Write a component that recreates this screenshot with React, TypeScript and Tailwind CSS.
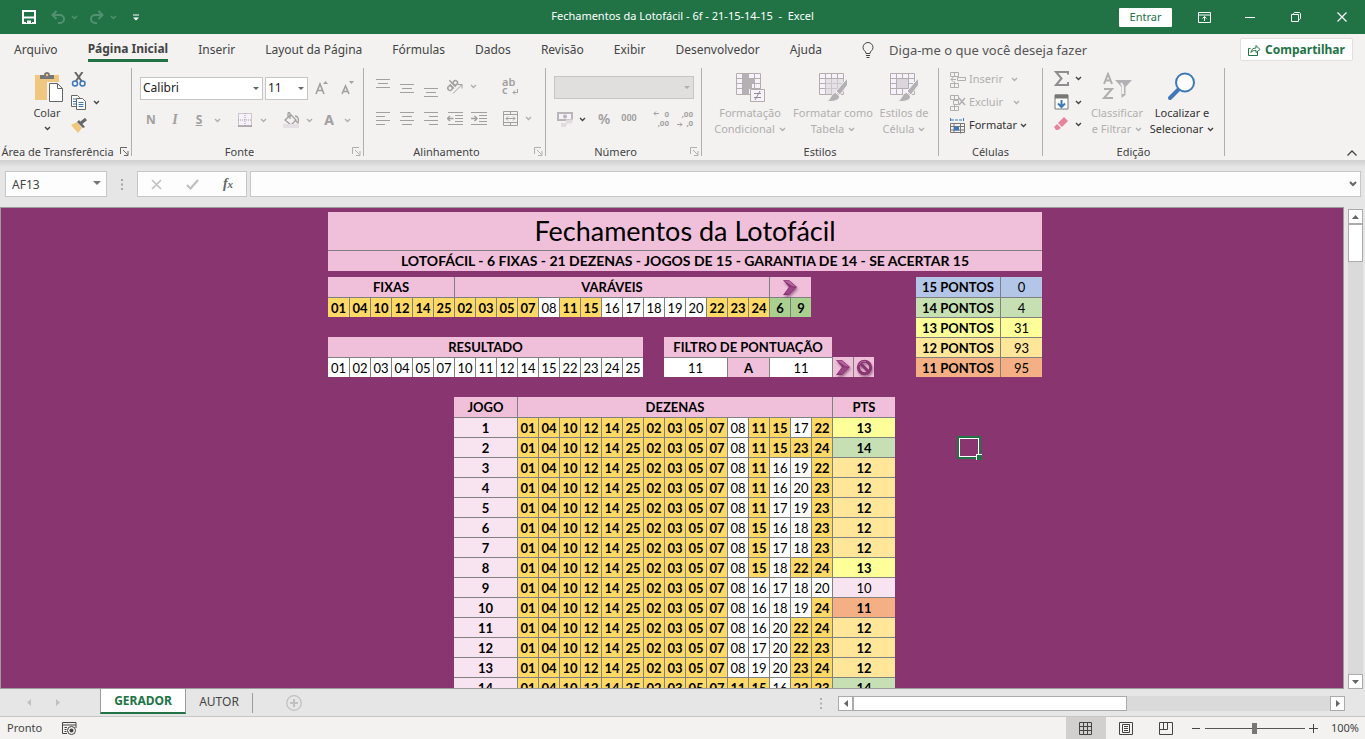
import React, { useState } from 'react';

const FIXED = ['01', '04', '10', '12', '14', '25'];
const VARIABLE = ['02', '03', '05', '07', '08', '11', '15', '16', '17', '18', '19', '20', '22', '23', '24'];
const RESULT = ['01', '02', '03', '04', '05', '07', '10', '11', '12', '14', '15', '22', '23', '24', '25'];

// Every game starts with the same ten numbers, only the tail changes
const GAME_HEAD = ['01', '04', '10', '12', '14', '25', '02', '03', '05', '07'];
const GAME_TAILS = [
  ['08', '11', '15', '17', '22'],
  ['08', '11', '15', '23', '24'],
  ['08', '11', '16', '19', '22'],
  ['08', '11', '16', '20', '23'],
  ['08', '11', '17', '19', '23'],
  ['08', '15', '16', '18', '23'],
  ['08', '15', '17', '18', '23'],
  ['08', '15', '18', '22', '24'],
  ['08', '16', '17', '18', '20'],
  ['08', '16', '18', '19', '24'],
  ['08', '16', '20', '22', '24'],
  ['08', '17', '20', '22', '23'],
  ['08', '19', '20', '23', '24'],
  ['11', '15', '16', '22', '23'],
];

const POINTS = [
  { points: 15, total: 0 },
  { points: 14, total: 4 },
  { points: 13, total: 31 },
  { points: 12, total: 93 },
  { points: 11, total: 95 },
];

const pointColors: Record<number, string> = {
  15: 'bg-[#b4c6e7]',
  14: 'bg-[#c6e0b4]',
  13: 'bg-[#ffff99]',
  12: 'bg-[#ffe699]',
  11: 'bg-[#f4b084]',
};

const TABS = ['Arquivo', 'Página Inicial', 'Inserir', 'Layout da Página', 'Fórmulas', 'Dados', 'Revisão', 'Exibir', 'Desenvolvedor', 'Ajuda'];

interface IconProps {
  w: number;
  h: number;
  className?: string;
  children: React.ReactNode;
}

const Icon: React.FC<IconProps> = ({ w, h, className = '', children }) => (
  <svg width={w} height={h} viewBox={`0 0 ${w} ${h}`} fill="none" stroke="currentColor" className={`shrink-0 ${className}`} aria-hidden="true">
    {children}
  </svg>
);

const Chevron: React.FC<{ className?: string }> = ({ className = 'text-[#b1afae]' }) => (
  <Icon w={7} h={5} className={className}>
    <path d="M1 1l2.5 2.5L6 1" strokeWidth="1.4" />
  </Icon>
);

const Launcher: React.FC<{ className?: string }> = ({ className = 'text-[#b1afae]' }) => (
  <button className={`absolute right-[2px] bottom-0 ${className}`} aria-label="Mais opções">
    <Icon w={9} h={9}>
      <path d="M.5 7V.5H7M3 3l4.5 4.5M8 4v4.5H4" />
    </Icon>
  </button>
);

interface GroupProps {
  label: string;
  className: string;
  launcher?: React.ReactNode;
  children: React.ReactNode;
}

const Group: React.FC<GroupProps> = ({ label, className, launcher, children }) => (
  <section className={`relative flex h-[88px] shrink-0 flex-col border-r border-[#b1afae] ${className}`}>
    <div className="flex-1">{children}</div>
    <div className="flex h-[9px] items-center justify-center whitespace-nowrap leading-[9px]">{label}</div>
    {launcher}
  </section>
);

const Tool: React.FC<{ label: string; className?: string; children: React.ReactNode }> = ({ label, className = 'w-6', children }) => (
  <button aria-label={label} className={`flex h-6 shrink-0 items-center justify-center ${className}`}>
    {children}
  </button>
);

const AlignIcon: React.FC<{ rows: [number, number][] }> = ({ rows }) => (
  <Icon w={14} h={rows.length * 4 - 3}>
    {rows.map(([x, len], i) => (
      <path key={i} d={`M${x} ${i * 4 + 0.5}h${len}`} />
    ))}
  </Icon>
);

const GridIcon: React.FC<{ brush?: boolean; children?: React.ReactNode }> = ({ brush, children }) => (
  <Icon w={30} h={30}>
    <path d="M1.5 1.5h24v21h-24z" fill="#f6f1fa" />
    <path d="M1.5 6.5h24M1.5 11.500h24M1.5 16.500h24M7.500 1.500v21M13.500 1.500v21M19.500 1.500v21" />
    {children}
    {brush && (
      <>
        <path d="M29.500 6L18 19l4 4 7.500-10z" fill="#b3b1b3" stroke="#f3f2f1" />
        <path d="M17.500 20.500l4 3.500c0 4-4 6-14 5.500 5 0 5-8 10-9z" fill="#b3b1b3" stroke="#f3f2f1" />
      </>
    )}
  </Icon>
);

const ArrowShape: React.FC = () => (
  <svg width="17" height="17" viewBox="0 0 17 17" aria-hidden="true" className="drop-shadow-[1px_2px_1px_rgba(90,40,80,0.5)]">
    <path d="M1 1h6l8 7-8 8H1l6-8z" fill="#883570" />
    <path d="M2 1.500h5l7 6.500-4-1z" fill="#b463a0" />
    <path d="M3 14l5-6 5 1-6 6z" fill="#9c4687" />
  </svg>
);

const TitleBar: React.FC = () => (
  <header className="grid h-[34px] shrink-0 grid-cols-[1fr_auto_1fr] items-center bg-[#217346] text-[#fff]">
    <div className="flex items-center pl-[22px]">
      <button aria-label="Salvar">
        <Icon w={14} h={14}>
          <path d="M1 1h12v12H1z" strokeWidth="2" />
          <path d="M1 7.500h12" strokeWidth="2" />
          <path d="M4.500 13v-3h5v3" fill="currentColor" stroke="#217346" strokeWidth="1" />
        </Icon>
      </button>
      <button aria-label="Desfazer" className="ml-[15px] flex items-center gap-[6px] text-[#519171]">
        <Icon w={14} h={14}>
          <path d="M5.500 1L1.500 5l4 4M1.500 5H9a4 4 0 010 8H7" strokeWidth="2" />
        </Icon>
        <Chevron className="text-[#519171]" />
      </button>
      <button aria-label="Refazer" className="ml-3 flex items-center gap-[6px] text-[#519171]">
        <Icon w={14} h={14}>
          <path d="M8.500 1l4 4-4 4M12.500 5H5a4 4 0 000 8h2" strokeWidth="2" />
        </Icon>
        <Chevron className="text-[#519171]" />
      </button>
      <button aria-label="Personalizar barra" className="ml-4">
        <Icon w={6} h={7}>
          <path d="M0 1h6" />
          <path d="M0 3.500h6L3 6.500z" fill="currentColor" stroke="none" />
        </Icon>
      </button>
    </div>
    <h1 className="whitespace-pre pb-[2px] text-[11px] leading-4">Fechamentos da Lotofácil - 6f - 21-15-14-15  -  Excel</h1>
    <div className="flex items-center justify-end">
      <button className="mr-[9px] h-[19px] w-[53px] rounded-[1px] bg-white text-[11px] leading-4 text-[#217346]">Entrar</button>
      <Tool label="Opções da faixa" className="w-[46px]">
        <Icon w={13} h={11}>
          <path d="M.5.500h12v10H.5zM.5 3h12M6.500 9V4.500M4.500 6.500l2-2 2 2" />
        </Icon>
      </Tool>
      <Tool label="Minimizar" className="w-[46px]">
        <Icon w={10} h={1}>
          <path d="M0 .5h10" />
        </Icon>
      </Tool>
      <Tool label="Restaurar" className="w-[46px]">
        <Icon w={10} h={10}>
          <path d="M.5 2.500h7v7h-7zM2.500 2.500v-1l1-1h5l1 1v5l-1 1h-1" />
        </Icon>
      </Tool>
      <Tool label="Fechar" className="w-[46px]">
        <Icon w={10} h={10}>
          <path d="M.5.500l9 9M9.500.500l-9 9" strokeWidth="1.200" />
        </Icon>
      </Tool>
    </div>
  </header>
);

const MenuBar: React.FC = () => (
  <nav className="mb-[2px] flex h-[31px] shrink-0 items-center px-3 text-xs leading-5 text-[#444]">
    <div className="flex items-center gap-[30px] pl-[2px]">
      {TABS.map((tab) => (
        <button
          key={tab}
          className={`h-[25px] whitespace-nowrap ${tab === 'Página Inicial' ? 'border-b-[3px] border-[#217346] pt-[2px] font-bold' : ''}`}
        >
          {tab}
        </button>
      ))}
    </div>
    <label className="ml-10 flex flex-1 items-center gap-[15px]">
      <Icon w={12} h={16}>
        <path d="M4 11.500C4 9 1 8.500 1 5.500a5 5 0 0110 0c0 3-3 3.500-3 6zM4 13.500h4M4.500 15.500h3" />
      </Icon>
      <input
        className="w-full bg-transparent text-[13px] outline-none placeholder:text-[#555]"
        placeholder="Diga-me o que você deseja fazer"
        aria-label="Pesquisar"
      />
    </label>
    <button className="flex h-[23px] w-[113px] items-center justify-center gap-1 rounded-[2px] border border-[#e1dfdd] bg-white font-bold text-[#217346]">
      <Icon w={13} h={12}>
        <path d="M2.500 4.500h-2v7h9V8M3 8.500c0-3 2-4.500 5-4.500V1.500l4 4-4 3V6.500c-2 0-4 0-5 2z" />
      </Icon>
      Compartilhar
    </button>
  </nav>
);

const Field: React.FC<{ label: string; value: string; className: string; disabled?: boolean }> = ({ label, value, className, disabled }) => (
  <span className={`relative block ${className}`}>
    <select
      aria-label={label}
      disabled={disabled}
      className="h-[23px] w-full appearance-none border border-[#c8c6c4] bg-white px-[2px] text-xs leading-5 text-[#222] disabled:bg-[#e1dfdd] disabled:opacity-100"
    >
      <option>{value}</option>
    </select>
    <Icon w={6} h={3} className={`pointer-events-none absolute top-[10px] right-1 ${disabled ? 'text-[#b1afae]' : 'text-[#666]'}`}>
      <path d="M0 0h6L3 3z" fill="currentColor" stroke="none" />
    </Icon>
  </span>
);

const BigTool: React.FC<{ lines: [string, string]; className: string; chevron?: string; children: React.ReactNode }> = ({
  lines,
  className,
  chevron,
  children,
}) => (
  <button className={`flex shrink-0 flex-col items-center whitespace-nowrap pt-1 leading-4 ${className}`}>
    <span className="flex h-[33px] items-start">{children}</span>
    <span>{lines[0]}</span>
    <span className="flex items-center gap-1">
      {lines[1]}
      <Chevron className={chevron} />
    </span>
  </button>
);

const Ribbon: React.FC = () => (
  <div className="relative flex h-[93px] shrink-0 pt-px text-[11px] text-[#444]">
    <Group label="Área de Transferência" className="w-[132px] pr-[16px]" launcher={<Launcher className="text-[#666]" />}>
      <div className="flex pt-1 pl-[30px]">
        <button className="flex w-[34px] flex-col items-center leading-4">
          <Icon w={28} h={30} className="mb-[3px] ml-1">
            <path d="M0 3h24v25H0z" fill="#f0c77f" stroke="none" />
            <path d="M5 3h4c0-4 6-4 6 0h4v4H5z" fill="#777" stroke="none" />
            <circle cx="12" cy="3" r="1.200" fill="#f0c77f" stroke="none" />
            <path d="M13.500 11.500h10l4 4v14h-14z" fill="#fff" stroke="#f3f2f1" strokeWidth="3" />
            <path d="M14.500 11.500h8l5 5v13h-13zM22.500 11.500v5h5" fill="#fff" stroke="#666" />
          </Icon>
          Colar
          <span className="flex h-[14px] items-center">
            <Chevron className="text-[#444]" />
          </span>
        </button>
        <div className="ml-[7px] flex flex-col gap-2">
          <button aria-label="Recortar">
            <Icon w={16} h={15}>
              <path d="M4 0l6.500 9M11.500 0L5 9" stroke="#666" strokeWidth="2" />
              <circle cx="4" cy="11.500" r="2.500" stroke="#3e78b8" strokeWidth="1.500" />
              <circle cx="11.500" cy="11.500" r="2.500" stroke="#3e78b8" strokeWidth="1.500" />
            </Icon>
          </button>
          <button aria-label="Copiar" className="flex items-center gap-[6px]">
            <Icon w={16} h={15} className="text-[#666]">
              <path d="M.5.500h6l2 2v9h-8z" fill="#fff" />
              <path d="M2 4h4M2 6.500h3M2 9h3" stroke="#3e78b8" />
              <path d="M5.500 3.500h6l3 3v8h-9z" fill="#fff" />
              <path d="M7.500 7.500h5M7.500 9.500h5M7.500 11.500h5" stroke="#3e78b8" />
            </Icon>
            <Chevron className="text-[#444]" />
          </button>
          <button aria-label="Pincel de formatação">
            <Icon w={16} h={15}>
              <path d="M0 7l6-3 5 6-4 5z" fill="#f0c77f" stroke="none" />
              <path d="M6 4l2-2 6 7-2 1z" fill="#666" stroke="none" />
              <path d="M10 5l5-4" stroke="#666" strokeWidth="3" />
            </Icon>
          </button>
        </div>
      </div>
    </Group>

    <Group label="Fonte" className="w-[232px] pr-4" launcher={<Launcher />}>
      <div className="flex items-center gap-[2px] pt-2 pl-2">
        <Field label="Fonte" value="Calibri" className="w-[123px] shrink-0" />
        <Field label="Tamanho" value="11" className="w-[43px] shrink-0" />
        <Tool label="Aumentar fonte">
          <Icon w={14} h={14} className="text-[#a19fa0]">
            <path d="M1 13L5 3l4 10M2.500 9.500h5" strokeWidth="1.600" />
            <path d="M8 3l2.500-3L13 3z" fill="currentColor" stroke="none" />
          </Icon>
        </Tool>
        <Tool label="Diminuir fonte">
          <Icon w={14} h={14} className="text-[#a19fa0]">
            <path d="M1 13l3.500-8L8 13M2.500 10.500h4" strokeWidth="1.600" />
            <path d="M8 0h5l-2.500 3z" fill="currentColor" stroke="none" />
          </Icon>
        </Tool>
      </div>
      <div className="flex items-center pt-2 pl-[7px] text-[#a19fa0]">
        <Tool label="Negrito">
          <b className="text-xs">N</b>
        </Tool>
        <Tool label="Itálico">
          <i className="font-['Liberation_Serif'] text-sm font-bold">I</i>
        </Tool>
        <Tool label="Sublinhado">
          <b className="text-xs underline">S</b>
        </Tool>
        <Tool label="Tipo de sublinhado" className="w-3">
          <Chevron />
        </Tool>
        <span className="ml-[6px] h-5 w-px bg-[#c8c6c4]" />
        <Tool label="Bordas" className="ml-1 w-6">
          <Icon w={14} h={14}>
            <path d="M.5.500h13v13H.5zM7 0v14M0 7h14" strokeDasharray="1 1" fill="#f6f1fa" />
            <path d="M0 13h14" strokeWidth="1.500" />
          </Icon>
        </Tool>
        <Tool label="Opções de borda" className="w-3">
          <Chevron />
        </Tool>
        <span className="mx-[6px] h-5 w-px bg-[#c8c6c4]" />
        <Tool label="Cor de preenchimento" className="w-5">
          <Icon w={16} h={16}>
            <path d="M2 8l6-5 5 5-5 5z" fill="#f3f2f1" strokeWidth="1.300" />
            <path d="M7 7V2c0-2-2-2-2 0v3M12 4c3 0 4 3 3 7-1 0-2-2-3-3" strokeWidth="1.300" />
            <path d="M0 14h16" stroke="#e3dfe3" strokeWidth="4" />
          </Icon>
        </Tool>
        <Tool label="Opções de preenchimento" className="w-4">
          <Chevron />
        </Tool>
        <Tool label="Cor da fonte">
          <b className="text-sm">A</b>
        </Tool>
        <Tool label="Opções de cor" className="w-3">
          <Chevron />
        </Tool>
      </div>
    </Group>

    <Group label="Alinhamento" className="w-[182px] pr-4" launcher={<Launcher />}>
      <div className="flex pt-[6px] pl-[7px] text-[#a19fa0]">
        <div>
          <div className="flex h-6 items-start">
            <Tool label="Alinhar em cima" className="h-[19px] w-6">
              <AlignIcon rows={[[0, 14], [2, 10], [0, 14]]} />
            </Tool>
            <Tool label="Alinhar no meio" className="h-7 w-6">
              <AlignIcon rows={[[0, 14], [2, 10], [0, 14]]} />
            </Tool>
            <Tool label="Alinhar embaixo" className="h-9 w-6">
              <AlignIcon rows={[[0, 14], [2, 10], [0, 14]]} />
            </Tool>
            <Tool label="Orientação" className="h-6 w-6">
              <Icon w={16} h={16}>
                <g transform="rotate(-45 8 8)">
                  <circle cx="3" cy="6" r="2.200" strokeWidth="1.500" />
                  <path d="M5.500 3v6M8 0v9" strokeWidth="1.500" />
                  <circle cx="10.500" cy="6" r="2.200" strokeWidth="1.500" />
                </g>
                <path d="M6 15.500l9-9M11 6.500h4v4" />
              </Icon>
            </Tool>
            <Tool label="Opções de orientação" className="h-6 w-3">
              <Chevron />
            </Tool>
          </div>
          <div className="flex items-center pt-2">
            <Tool label="Alinhar à esquerda">
              <AlignIcon rows={[[0, 14], [0, 9], [0, 14], [0, 9]]} />
            </Tool>
            <Tool label="Centralizar">
              <AlignIcon rows={[[0, 14], [2, 10], [0, 14], [2, 10]]} />
            </Tool>
            <Tool label="Alinhar à direita">
              <AlignIcon rows={[[0, 14], [5, 9], [0, 14], [5, 9]]} />
            </Tool>
            <Tool label="Diminuir recuo">
              <Icon w={16} h={13}>
                <path d="M1 .5h15M8 3.500h8M8 6.500h8M8 9.500h8M1 12.500h15" />
                <path d="M6.500 6.500h-6M3 4L.5 6.500 3 9" strokeWidth="1.500" />
              </Icon>
            </Tool>
            <Tool label="Aumentar recuo">
              <Icon w={16} h={13}>
                <path d="M0 .5h16M8 3.500h8M8 6.500h8M8 9.500h8M0 12.500h16" />
                <path d="M0 6.500h6M3.500 4L6 6.500 3.500 9" strokeWidth="1.500" />
              </Icon>
            </Tool>
          </div>
        </div>
        <span className="ml-1 h-[59px] w-px bg-[#c8c6c4]" />
        <div className="pl-[7px]">
          <Tool label="Quebrar texto" className="h-6 w-4">
            <span className="relative block w-4 text-left text-[11px] leading-[8px] font-semibold">
              ab
              <br />c
              <Icon w={6} h={6} className="absolute right-0 -bottom-px">
                <path d="M5.500 0v3.500H1M3 1.500l-2 2 2 2" />
              </Icon>
            </span>
          </Tool>
          <div className="flex pt-2">
            <Tool label="Mesclar e centralizar" className="w-4">
              <Icon w={15} h={15}>
                <path d="M.5.500h14v14H.5zM.5 3.500h14M.5 11.500h14M7.500.500v3M7.500 11.500v3M3 7.500h9M5 5.500l-2 2 2 2M10 5.500l2 2-2 2" />
              </Icon>
            </Tool>
            <Tool label="Opções de mesclagem" className="w-5">
              <Chevron />
            </Tool>
          </div>
        </div>
      </div>
    </Group>

    <Group label="Número" className="w-[156px] pr-4" launcher={<Launcher />}>
      <div className="w-[148px] pt-2 pl-2">
        <Field label="Formato de número" value="" className="w-full" disabled />
      </div>
      <div className="flex items-center pt-2 pl-[11px] text-[#a19fa0]">
        <Tool label="Formato contábil" className="w-4">
          <Icon w={16} h={15} className="text-[#b8b6b8]">
            <path d="M1 1h14v7H1z" strokeWidth="2" fill="#f6f1fa" />
            <circle cx="8" cy="4.500" r="2" fill="currentColor" stroke="none" />
            <path d="M9 8.500h7M9 10.500h6M4 12h6M4 14h5" stroke="#e0dce0" strokeWidth="2" />
          </Icon>
        </Tool>
        <Tool label="Opções contábeis" className="w-[18px]">
          <Chevron className="text-[#444]" />
        </Tool>
        <Tool label="Porcentagem" className="w-[26px]">
          <span className="text-sm font-semibold">%</span>
        </Tool>
        <Tool label="Separador de milhares" className="w-6">
          <span className="font-['Roboto'] text-[9px] font-bold">000</span>
        </Tool>
        <span className="mx-1 h-5 w-px bg-[#c8c6c4]" />
        <Tool label="Aumentar casas decimais" className="w-6 font-['Roboto'] font-bold">
          <span className="relative flex w-4 flex-col text-right text-[8px] leading-[9px]">
            <Icon w={6} h={5} className="absolute top-px left-0">
              <path d="M6 2.500H1M3 .5l-2 2 2 2" />
            </Icon>
            <span>0</span>
            <span>,00</span>
          </span>
        </Tool>
        <Tool label="Diminuir casas decimais" className="w-6 font-['Roboto'] font-bold">
          <span className="relative flex w-4 flex-col text-right text-[8px] leading-[9px]">
            <Icon w={6} h={5} className="absolute bottom-px left-0">
              <path d="M0 2.500h5M3 .5l2 2-2 2" />
            </Icon>
            <span>,00</span>
            <span>,0</span>
          </span>
        </Tool>
      </div>
    </Group>

    <Group label="Estilos" className="w-[237px]">
      <div className="flex gap-[2px] pl-[9px] text-[#b1afae]">
        <BigTool lines={['Formatação', 'Condicional']} className="w-[78px]">
          <GridIcon>
            <path d="M8 2h6v5H8zM8 7h12v5H8zM8 12h9v5H8zM8 17h6v5H8z" fill="#b3b1b3" stroke="none" />
            <path d="M15.500 17.500h14v12h-14z" fill="#f6f1fa" />
            <path d="M19 21.500h7M19 25.500h7M25 19l-5 9" stroke="#8f8d8f" />
          </GridIcon>
        </BigTool>
        <BigTool lines={['Formatar como', 'Tabela']} className="w-[84px]">
          <GridIcon brush>
            <path d="M7.500 7h18v15h-18z" fill="#dcd6dc" fillOpacity=".6" stroke="none" />
          </GridIcon>
        </BigTool>
        <BigTool lines={['Estilos de', 'Célula']} className="w-[54px]">
          <GridIcon brush>
            <path d="M7.500 6.500h12v10h-12z" fill="#dcd6dc" />
          </GridIcon>
        </BigTool>
      </div>
    </Group>

    <Group label="Células" className="w-[104px]">
      <div className="flex flex-col pl-[11px] text-[#b1afae]">
        <button className="flex h-[23px] items-center gap-[3px]">
          <Icon w={16} h={16}>
            <path d="M.5.500h8v4h-8zM4.500.500v4M7.500 5.500h8v3h-8zM.5 11.500h8v4h-8zM4.500 9.500v6M6 7.500H1M3.500 5L1 7.500 3.500 10" />
          </Icon>
          <span className="w-[39px] text-left">Inserir</span>
          <Chevron />
        </button>
        <button className="flex h-[23px] items-center gap-[3px]">
          <Icon w={16} h={16}>
            <path d="M.5.500h8v4h-8zM4.500.500v4M3.500 5.500h5v4h-5zM.5 11.500h8v4h-8zM4.500 9.500v6" />
            <path d="M9 3l6 7M15 3l-6 7" strokeWidth="1.500" />
          </Icon>
          <span className="w-[41px] text-left">Excluir</span>
          <Chevron />
        </button>
        <button className="flex h-[23px] items-center gap-[3px] text-[#333]">
          <Icon w={16} h={16}>
            <path d="M.5 0v4M13.500 0v4M1 2h12" stroke="#3e78b8" strokeDasharray="3 1" />
            <path d="M.5 5.500h14v9H.5zM.5 8.500h14M.5 12h14M4 5.500v9M10.500 5.500v10" stroke="#777" />
            <path d="M4 8.500h5v4H4z" fill="#3e78b8" stroke="none" />
          </Icon>
          Formatar
          <Chevron className="text-[#444]" />
        </button>
      </div>
    </Group>

    <Group label="Edição" className="w-[182px]">
      <div className="flex pl-[11px]">
        <div className="flex w-[27px] flex-col">
          <button aria-label="AutoSoma" className="flex h-5 items-center gap-[6px]">
            <Icon w={15} h={15} className="text-[#8f8d8f]">
              <path d="M14 3.500V1H2l5.500 6.500L2 14h12v-3" strokeWidth="2" />
            </Icon>
            <Chevron className="text-[#444]" />
          </button>
          <button aria-label="Preencher" className="mt-1 flex h-5 items-center gap-[6px]">
            <Icon w={15} h={16}>
              <path d="M1 1h13v14H1z" fill="#fff" stroke="#777" />
              <path d="M1 2.500h13" stroke="#777" strokeWidth="4" />
              <path d="M7.500 6v7M4 9.500L7.500 13 11 9.500" stroke="#3e78b8" strokeWidth="2" />
            </Icon>
            <Chevron className="text-[#444]" />
          </button>
          <button aria-label="Limpar" className="mt-[2px] flex h-5 items-center gap-[6px]">
            <Icon w={15} h={14}>
              <path d="M4 6l6-6 4 4-6 6z" fill="#e8829a" stroke="none" />
              <path d="M3 7l4 4-3 2H2L0 10z" fill="#e8829a" stroke="none" />
            </Icon>
            <Chevron className="text-[#444]" />
          </button>
        </div>
        <BigTool lines={['Classificar', 'e Filtrar']} className="w-[72px] text-[#b1afae]">
          <Icon w={30} h={28}>
            <path d="M2 12L6 2l4 10M3.500 8.500h5M2 17h8L2 26h9" strokeWidth="2" />
            <path d="M13 8h17l-6.500 7v8l-4 3V15z" fill="#b3b1b3" stroke="none" />
            <path d="M19 11l2 3v8" stroke="#f3f2f1" strokeWidth="2" />
          </Icon>
        </BigTool>
        <BigTool lines={['Localizar e', 'Selecionar']} className="w-[58px] text-[#333]" chevron="text-[#444]">
          <Icon w={28} h={28}>
            <path d="M2 26l9-9" stroke="#3e78b8" strokeWidth="4" strokeLinecap="round" />
            <circle cx="17" cy="10.500" r="9" stroke="#3e78b8" strokeWidth="2" fill="#fff" />
          </Icon>
        </BigTool>
      </div>
    </Group>
    <button aria-label="Recolher faixa" className="mt-auto mr-2 mb-1 ml-auto text-[#444]">
      <Icon w={10} h={6}>
        <path d="M.5 5.500L5 1l4.500 4.500" strokeWidth="1.300" />
      </Icon>
    </button>
  </div>
);

const FormulaBar: React.FC = () => (
  <div className="flex h-[47px] shrink-0 items-start bg-linear-to-b from-[#cfcfcf] to-[#e6e6e6] to-15% pt-[11px] pr-1 pl-[5px]">
    <span className="relative block w-[102px] shrink-0">
      <input
        aria-label="Caixa de nome"
        defaultValue="AF13"
        className="block h-[26px] w-full border border-[#c6c6c6] bg-[#fdfdfd] px-[6px] text-xs text-[#444] outline-none"
      />
      <Icon w={8} h={4} className="absolute top-[10px] right-[6px] text-[#777]">
        <path d="M0 0h8L4 4z" fill="currentColor" stroke="none" />
      </Icon>
    </span>
    <Icon w={2} h={11} className="mx-[14px] mt-2 text-[#a6a6a6]">
      <path d="M1 0v2M1 4.500v2M1 9v2" strokeWidth="2" />
    </Icon>
    <div className="flex h-[26px] w-[110px] shrink-0 items-center border border-[#c6c6c6] bg-[#fdfdfd]">
      <Tool label="Cancelar" className="w-9">
        <Icon w={11} h={11} className="text-[#c0c0c0]">
          <path d="M1 1l9 9M10 1l-9 9" strokeWidth="1.600" />
        </Icon>
      </Tool>
      <Tool label="Inserir" className="w-9">
        <Icon w={13} h={11} className="text-[#c0c0c0]">
          <path d="M1 6l3.500 3.500L12 1" strokeWidth="2.200" />
        </Icon>
      </Tool>
      <Tool label="Inserir função" className="w-9">
        <i className="font-['Liberation_Serif'] text-sm leading-4 font-bold text-[#666]">
          f<span className="text-[11px]">x</span>
        </i>
      </Tool>
    </div>
    <label className="relative ml-[3px] flex-1">
      <input aria-label="Barra de fórmulas" className="block h-[26px] w-full border border-[#c6c6c6] bg-[#fdfdfd] px-2 text-xs outline-none" />
      <Icon w={8} h={6} className="absolute top-[10px] right-1 text-[#666]">
        <path d="M1 1l3 3 3-3" strokeWidth="2" />
      </Icon>
    </label>
  </div>
);

// Numbers that were drawn are highlighted in every list
const numberClass = (n: string) => (RESULT.includes(n) ? 'bg-[#ffd966] font-bold' : 'bg-white');

const tableClass = 'table-fixed border-separate border-spacing-0 border-[#808080]';
const cellClass = 'h-5 border-[#808080] p-0 text-center leading-[18px] not-first:border-l';

const Sheet: React.FC = () => (
  <main className="relative flex-1 overflow-hidden border border-[#9c9c9c] bg-[#883570] pt-1 pl-[327px] font-['Lato',sans-serif] text-[13px] text-black">
    <div className="w-[714px]">
      <div className="bg-[#f0bfda] text-center">
        <h2 className="h-[38px] text-[27px] leading-[38px]">Fechamentos da Lotofácil</h2>
        <p className="h-[21px] border-t border-[#808080] text-sm leading-5 font-bold">LOTOFÁCIL - 6 FIXAS - 21 DEZENAS - JOGOS DE 15 - GARANTIA DE 14 - SE ACERTAR 15</p>
      </div>

      <div className="mt-[6px] flex items-start justify-between">
        <div className="flex flex-col gap-5">
          <table className={`w-[483px] ${tableClass}`}>
            <thead className="bg-[#f0bfda]">
              <tr>
                <th colSpan={6} className={cellClass}>FIXAS</th>
                <th colSpan={15} className={cellClass}>VARÁVEIS</th>
                <th colSpan={2} className={cellClass}>
                  <button aria-label="Gerar jogos" className="flex h-5 w-full items-center justify-center">
                    <ArrowShape />
                  </button>
                </th>
              </tr>
            </thead>
            <tbody>
              <tr>
                {[...FIXED, ...VARIABLE].map((n) => (
                  <td key={n} className={`${cellClass} border-t ${numberClass(n)}`}>{n}</td>
                ))}
                <td className={`${cellClass} border-t bg-[#a9d08e] font-bold`}>6</td>
                <td className={`${cellClass} border-t bg-[#a9d08e] font-bold`}>9</td>
              </tr>
            </tbody>
          </table>

          <div className="flex items-end">
            <table className={`w-[315px] ${tableClass}`}>
              <thead>
                <tr>
                  <th colSpan={15} className={`${cellClass} bg-[#f0bfda]`}>RESULTADO</th>
                </tr>
              </thead>
              <tbody>
                <tr>
                  {RESULT.map((n) => (
                    <td key={n} className={`${cellClass} border-t bg-white`}>{n}</td>
                  ))}
                </tr>
              </tbody>
            </table>
            <table className={`ml-[21px] w-[168px] ${tableClass}`}>
              <thead>
                <tr>
                  <th colSpan={8} className={`${cellClass} bg-[#f0bfda]`}>FILTRO DE PONTUAÇÃO</th>
                </tr>
              </thead>
              <tbody>
                <tr>
                  <td colSpan={3} className={`${cellClass} border-t bg-white`}>11</td>
                  <td colSpan={2} className={`${cellClass} border-t bg-[#f0bfda] font-bold`}>A</td>
                  <td colSpan={3} className={`${cellClass} border-t bg-white`}>11</td>
                </tr>
              </tbody>
            </table>
            <button aria-label="Aplicar filtro" className="flex h-5 w-[21px] items-center justify-center border-l border-[#808080] bg-[#f0bfda]">
              <ArrowShape />
            </button>
            <button aria-label="Limpar filtro" className="flex h-5 w-[21px] items-center justify-center border-l border-[#808080] bg-[#f0bfda]">
              <svg width="17" height="17" viewBox="0 0 17 17" aria-hidden="true" fill="none" className="drop-shadow-[1px_2px_1px_rgba(90,40,80,0.5)]">
                <circle cx="8.500" cy="8.500" r="6.200" stroke="#883570" strokeWidth="3" />
                <path d="M4 4l9 9" stroke="#883570" strokeWidth="3" />
                <path d="M3 6a6 6 0 017-3.500" stroke="#b463a0" />
              </svg>
            </button>
          </div>
        </div>

        <table className={`w-[126px] ${tableClass}`}>
          <tbody>
            {POINTS.map(({ points, total }, i) => (
              <tr key={points} className={pointColors[points]}>
                <th scope="row" className={`${cellClass} w-[84px] ${i > 0 ? 'border-t' : ''}`}>{points} PONTOS</th>
                <td className={`${cellClass} ${i > 0 ? 'border-t' : ''}`}>{total}</td>
              </tr>
            ))}
          </tbody>
        </table>
      </div>

      <table className={`mt-5 ml-[126px] w-[441px] ${tableClass}`}>
        <thead className="bg-[#f0bfda]">
          <tr>
            <th colSpan={3} className={cellClass}>JOGO</th>
            <th colSpan={15} className={cellClass}>DEZENAS</th>
            <th colSpan={3} className={cellClass}>PTS</th>
          </tr>
        </thead>
        <tbody>
          {GAME_TAILS.map((tail, i) => {
            const numbers = [...GAME_HEAD, ...tail];
            const points = numbers.filter((n) => RESULT.includes(n)).length;
            return (
              <tr key={i}>
                <th scope="row" colSpan={3} className={`${cellClass} border-t bg-[#f8e3f0]`}>{i + 1}</th>
                {numbers.map((n) => (
                  <td key={n} className={`${cellClass} border-t ${numberClass(n)}`}>{n}</td>
                ))}
                <td colSpan={3} className={`${cellClass} border-t ${pointColors[points] ? `${pointColors[points]} font-bold` : 'bg-[#f8e3f0]'}`}>
                  {points}
                </td>
              </tr>
            );
          })}
        </tbody>
      </table>
    </div>

    {/* Selected cell */}
    <div className="absolute top-[228px] left-[956px] h-[23px] w-6 border-2 border-[#217346]">
      <div className="h-full w-full border border-white" />
      <div className="absolute -right-[3px] -bottom-[3px] h-[6px] w-[6px] border-t border-l border-white bg-[#217346]" />
    </div>
  </main>
);

const scrollButton = 'flex shrink-0 items-center justify-center border border-[#ababab] bg-white text-[#666]';

const SheetTabs: React.FC = () => (
  <div className="flex h-7 shrink-0 items-start border-b border-[#c6c6c6] bg-[#e6e6e6] pr-5">
    <div className="flex h-[26px] w-[100px] shrink-0 items-center gap-[25px] pl-[27px] text-[#c0c0c0]">
      <button aria-label="Planilha anterior">
        <Icon w={4} h={7}>
          <path d="M4 0v7L0 3.500z" fill="currentColor" stroke="none" />
        </Icon>
      </button>
      <button aria-label="Próxima planilha">
        <Icon w={4} h={7}>
          <path d="M0 0v7l4-3.500z" fill="currentColor" stroke="none" />
        </Icon>
      </button>
    </div>
    <button className="-mt-px h-[26px] w-[86px] shrink-0 border-x border-b-2 border-x-[#9c9c9c] border-b-[#217346] bg-white pt-px text-xs leading-6 font-bold text-[#217346]">
      GERADOR
    </button>
    <button className="h-[26px] w-[66px] shrink-0 text-xs leading-[26px] text-[#444]">AUTOR</button>
    <span className="mt-1 h-5 w-px bg-[#9c9c9c]" />
    <button aria-label="Nova planilha" className="mt-[6px] ml-[33px] text-[#c0c0c0]">
      <Icon w={16} h={16}>
        <circle cx="8" cy="8" r="7.300" strokeWidth="1.300" />
        <path d="M8 4v8M4 8h8" strokeWidth="2" />
      </Icon>
    </button>
    <div className="ml-auto flex w-[39%] items-start pt-[7px]">
      <Icon w={3} h={11} className="mt-[2px] mr-[15px] text-[#b0b0b0]">
        <path d="M1 0v2M1 4.500v2M1 9v2" strokeWidth="2" />
      </Icon>
      <div className="flex h-[15px] flex-1 bg-[#dadada]">
        <button aria-label="Rolar para a esquerda" className={`w-[15px] ${scrollButton}`}>
          <Icon w={4} h={7}>
            <path d="M4 0v7L0 3.500z" fill="currentColor" stroke="none" />
          </Icon>
        </button>
        <div className="w-[54%] border border-[#ababab] bg-white" />
        <button aria-label="Rolar para a direita" className={`ml-auto w-[15px] ${scrollButton}`}>
          <Icon w={4} h={7}>
            <path d="M0 0v7l4-3.500z" fill="currentColor" stroke="none" />
          </Icon>
        </button>
      </div>
    </div>
  </div>
);

const VerticalScroll: React.FC = () => (
  <div className="flex w-[21px] shrink-0 flex-col bg-[#e6e6e6] pt-[2px] pl-1">
    <div className="flex w-[15px] flex-1 flex-col bg-[#dadada]">
      <button aria-label="Rolar para cima" className={`h-[15px] ${scrollButton}`}>
        <Icon w={7} h={4}>
          <path d="M0 4h7L3.500 0z" fill="currentColor" stroke="none" />
        </Icon>
      </button>
      <div className="h-[38px] border border-[#ababab] bg-white" />
      <button aria-label="Rolar para baixo" className={`mt-auto h-[15px] ${scrollButton}`}>
        <Icon w={7} h={4}>
          <path d="M0 0h7L3.500 4z" fill="currentColor" stroke="none" />
        </Icon>
      </button>
    </div>
  </div>
);

const StatusBar: React.FC = () => {
  const [zoom, setZoom] = useState(100);

  return (
    <footer className="flex h-[22px] shrink-0 items-center pr-[6px] pl-[7px] text-[11px] text-[#444]">
      <span>Pronto</span>
      <button aria-label="Gravar macro" className="ml-5">
        <Icon w={15} h={13}>
          <path d="M14 6V.5H.5v11H5M.5 3h13.500M2.500 5.500h2.500M2.500 7.500h2M2.500 9.500h2" />
          <circle cx="9.500" cy="8.500" r="4" />
          <circle cx="9.500" cy="8.500" r="2" fill="currentColor" stroke="none" />
        </Icon>
      </button>
      <div className="ml-auto flex items-center">
        <Tool label="Normal" className="h-[22px] w-10 bg-[#d2d0ce]">
          <Icon w={13} h={13}>
            <path d="M.5.500h12v12H.5zM.5 4.500h12M.5 8.500h12M4.500.500v12M8.500.500v12" />
          </Icon>
        </Tool>
        <Tool label="Layout da página" className="w-10">
          <Icon w={14} h={13}>
            <path d="M.5.500h13v12H.5zM3.500 2.500h7v8h-7zM5 4.500h4M5 6.500h4M5 8.500h4" />
          </Icon>
        </Tool>
        <Tool label="Quebra de página" className="w-10">
          <Icon w={14} h={13}>
            <path d="M.5.500h13v12H.5zM.5 7.500h8v-7M4.500.500v7" />
          </Icon>
        </Tool>
        <button aria-label="Reduzir" className="ml-[6px]">
          <Icon w={8} h={1}>
            <path d="M0 .5h8" />
          </Icon>
        </button>
        <input
          type="range"
          aria-label="Zoom"
          min={10}
          max={190}
          value={zoom}
          onChange={(e) => setZoom(Number(e.target.value))}
          className="mr-1 ml-[5px] h-[11px] w-[100px] appearance-none bg-[linear-gradient(#555,#555)] bg-[length:100%_1px] bg-center bg-no-repeat [&::-webkit-slider-thumb]:h-[11px] [&::-webkit-slider-thumb]:w-[5px] [&::-webkit-slider-thumb]:appearance-none [&::-webkit-slider-thumb]:bg-[#777]"
        />
        <button aria-label="Ampliar">
          <Icon w={9} h={9}>
            <path d="M0 4.500h9M4.500 0v9" />
          </Icon>
        </button>
        <span className="ml-[13px]">{zoom}%</span>
      </div>
    </footer>
  );
};

export default function App() {
  return (
    <div className="flex h-screen flex-col overflow-hidden bg-[#f3f2f1] font-['Noto_Sans',sans-serif]">
      <TitleBar />
      <MenuBar />
      <Ribbon />
      <FormulaBar />
      <div className="flex min-h-0 flex-1">
        <Sheet />
        <VerticalScroll />
      </div>
      <SheetTabs />
      <StatusBar />
    </div>
  );
}
